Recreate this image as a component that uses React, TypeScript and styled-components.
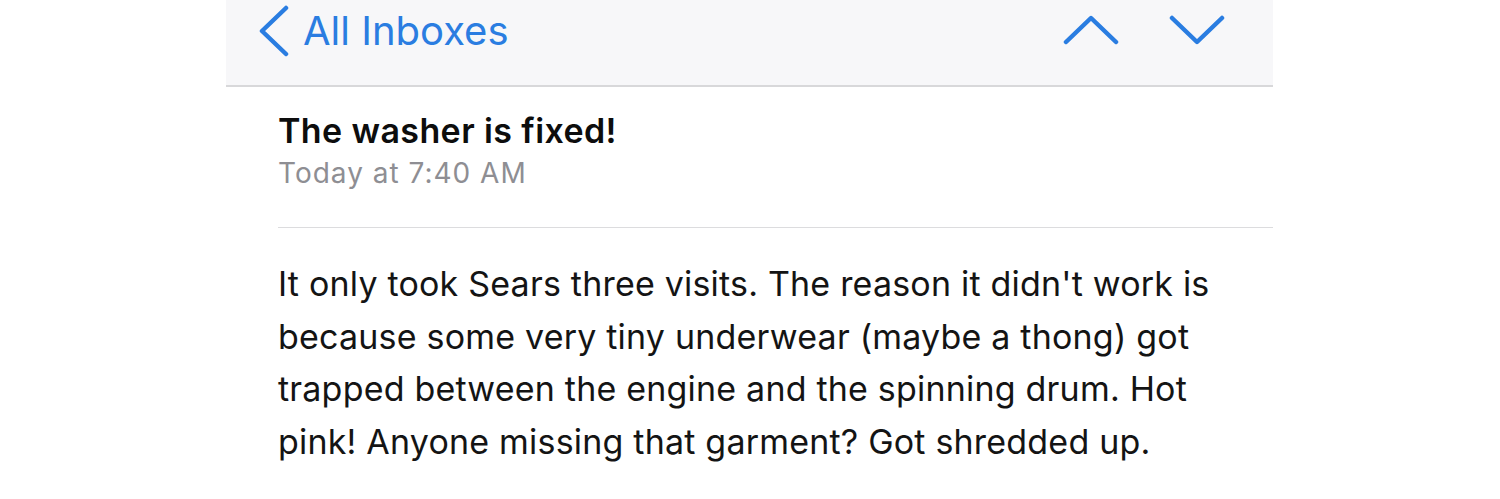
import React from "react";
import styled, { createGlobalStyle } from "styled-components";

const Global = createGlobalStyle`
  html, body { margin: 0; padding: 0; background: #ffffff; }
  body { font-family: Inter, "Liberation Sans", Arial, sans-serif; }
`;

const Page = styled.div`
  width: 1500px;
  height: 499px;
  overflow: hidden;
  background: #fff;
  display: flex;
  justify-content: center;
`;

const Column = styled.div`
  width: 1047px;
  margin-left: -1px;
  display: flex;
  flex-direction: column;
`;

const NavBar = styled.div`
  height: 85px;
  background: #f7f7f9;
  border-bottom: 2px solid #d8d8da;
  display: flex;
  align-items: center;
  justify-content: space-between;
  padding: 0 48px 0 31px;
  box-sizing: content-box;
`;

const BackButton = styled.div`
  display: flex;
  align-items: center;
  gap: 13px;
  color: #2a7de1;
  font-size: 40px;
  margin-top: -24px;
`;

const Arrows = styled.div`
  display: flex;
  align-items: center;
  gap: 50px;
  margin-top: -26px;
`;

const Header = styled.div`
  margin-left: 52px;
  padding: 26px 0 38px;
  border-bottom: 1px solid #dcdcde;
  display: flex;
  flex-direction: column;
  gap: 8px;
`;

const Subject = styled.div`
  font-size: 34px;
  font-weight: 600;
  color: #0d0d0d;
  line-height: 36px;
  letter-spacing: 0.4px;
`;

const DateLine = styled.div`
  font-size: 28px;
  color: #8e8e93;
  line-height: 32px;
  letter-spacing: 1px;
`;

const Body = styled.div`
  margin-left: 52px;
  padding-top: 30px;
  font-size: 34px;
  line-height: 52.5px;
  letter-spacing: 0.2px;
  color: #141414;
  width: 960px;
`;

const Chevron = ({ d, w, h }: { d: string; w: number; h: number }) => (
  <svg width={w} height={h} viewBox={`0 0 ${w} ${h}`} fill="none">
    <path d={d} stroke="#2a7de1" strokeWidth={4.5} strokeLinecap="round" strokeLinejoin="round" />
  </svg>
);

export default function App() {
  return (
    <>
      <Global />
      <Page>
        <Column>
          <NavBar>
            <BackButton>
              <Chevron w={33} h={52} d="M29 3 L5 26 L29 49" />
              <span>All Inboxes</span>
            </BackButton>
            <Arrows>
              <Chevron w={56} h={30} d="M3 27 L28 3 L53 27" />
              <Chevron w={56} h={30} d="M3 3 L28 27 L53 3" />
            </Arrows>
          </NavBar>
          <Header>
            <Subject>The washer is fixed!</Subject>
            <DateLine>Today at 7:40 AM</DateLine>
          </Header>
          <Body>
            It only took Sears three visits. The reason it didn't work is because some very tiny underwear (maybe a thong) got trapped between the engine and the spinning drum. Hot pink! Anyone missing that garment? Got shredded up.
          </Body>
        </Column>
      </Page>
    </>
  );
}
